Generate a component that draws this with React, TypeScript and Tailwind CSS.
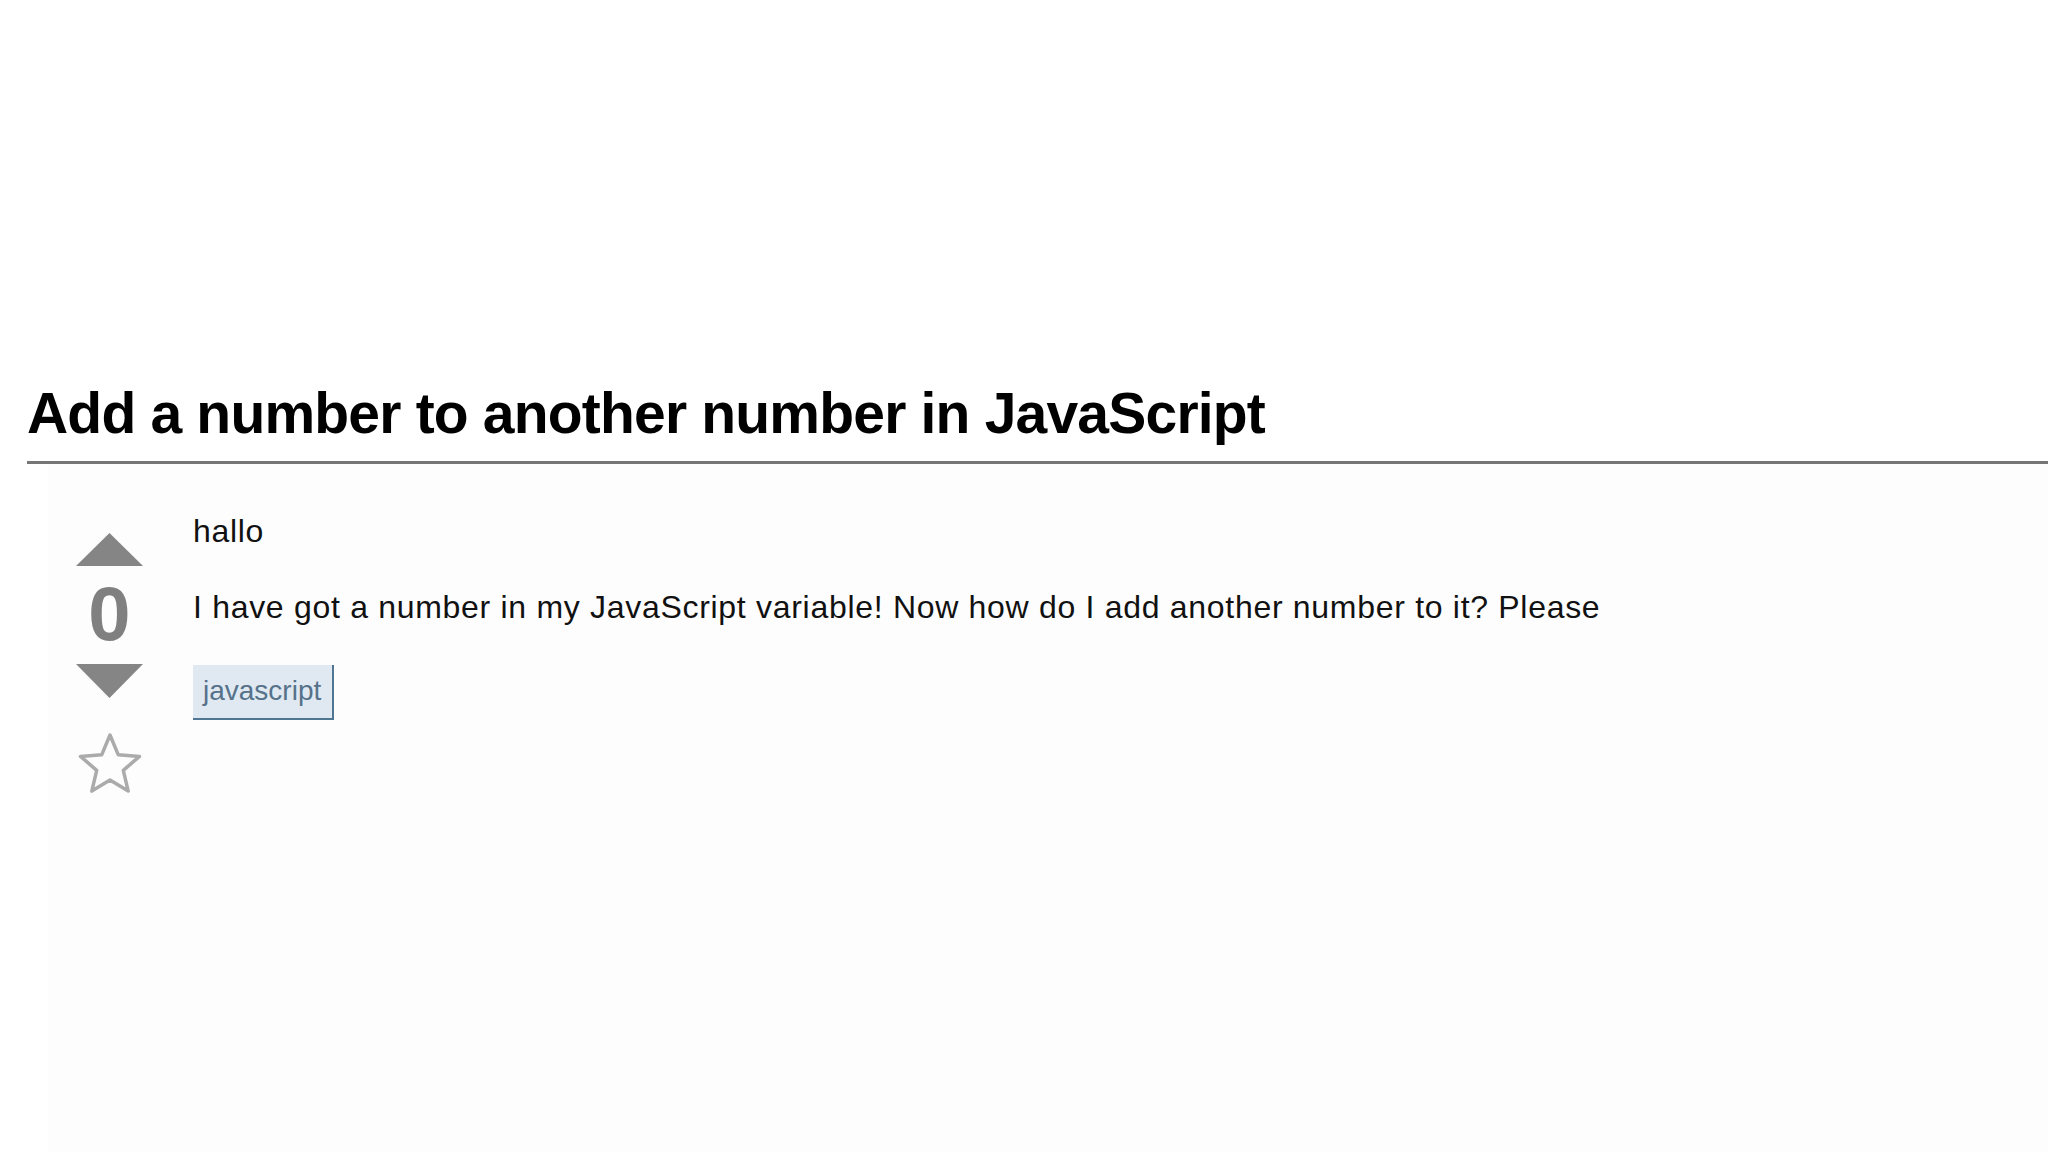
export default function App() {
  return (
    <div className="min-h-[1152px] bg-white font-['Liberation_Sans',Arial,sans-serif] text-black">
      <div className="pt-[385px] pl-[27px]">
        <h1 className="text-[57px] leading-none font-bold tracking-[-0.8px]">
          Add a number to another number in JavaScript
        </h1>
        <div className="mt-[19px] h-[3px] bg-[#767676]" />
      </div>

      <div className="ml-[48px] min-h-[688px] bg-[#fdfdfd] flex pt-[69px]">
        {/* vote column */}
        <div className="ml-[28px] w-[67px] flex flex-col items-center">
          <svg width="67" height="33" viewBox="0 0 67 33">
            <polygon points="33.5,0 67,33 0,33" fill="#858585" />
          </svg>
          <div className="mt-[13px] text-[76px] leading-[70px] font-bold text-[#808080]">0</div>
          <svg className="mt-[15px]" width="67" height="34" viewBox="0 0 67 34">
            <polygon points="0,0 67,0 33.5,34" fill="#858585" />
          </svg>
          <svg className="mt-[33px]" width="66" height="64" viewBox="0 0 66 64">
            <polygon
              points="33,4 41.2,23.7 62.5,25.4 46.3,39.3 51.2,60.1 33,49 14.8,60.1 19.7,39.3 3.5,25.4 24.8,23.7"
              fill="none"
              stroke="#ababab"
              strokeWidth="3.5"
              strokeLinejoin="round"
            />
          </svg>
        </div>

        {/* post body */}
        <div className="ml-[50px] text-[32px] leading-none text-[#111]">
          <p className="mt-[-18px] tracking-[0.7px]">hallo</p>
          <p className="mt-[44px] tracking-[0.7px]">
            I have got a number in my JavaScript variable! Now how do I add another number to it? Please
          </p>
          <div className="mt-[42px]">
            <span className="inline-block bg-[#e0e9f1] border-r-2 border-b-2 border-[#4f7794] pl-[10px] pr-[11px] pt-[12px] pb-[13px] text-[28px] leading-none text-[#56728a]">
              javascript
            </span>
          </div>
        </div>
      </div>
    </div>
  )
}
